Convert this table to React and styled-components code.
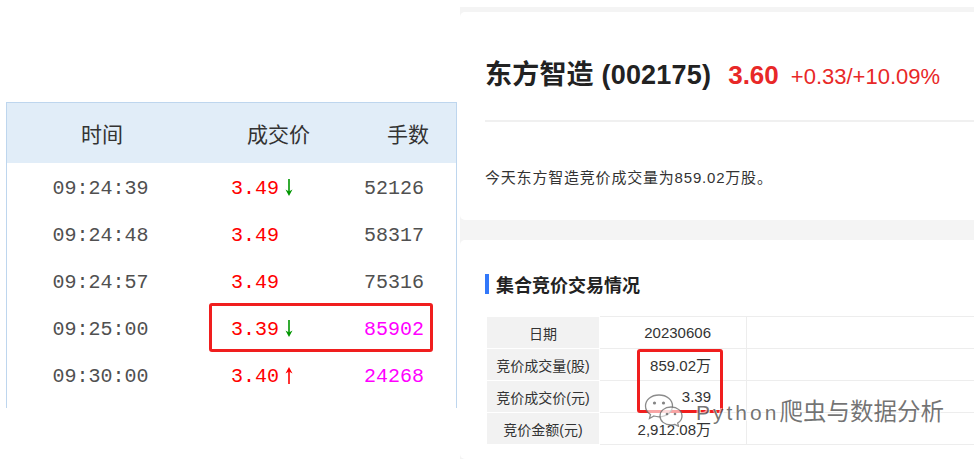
import styled, { createGlobalStyle } from 'styled-components'

const GlobalStyle = createGlobalStyle`
    html, body {
        margin: 0;
        padding: 0;
        background: #ffffff;
    }
    * {
        box-sizing: border-box;
    }
`;

const Page = styled.div`
    position: relative;
    display: flex;
    width: 974px;
    height: 459px;
    overflow: hidden;
    background: #ffffff;
`;

/* ---------- left: tick table ---------- */

const LeftPane = styled.div`
    flex: none;
    width: 460px;
    padding: 102px 0 0 6px;
`;

const TickTable = styled.div`
    width: 451px;
    height: 306px;
    border: 1px solid rgb(190, 214, 238);
    border-bottom: none;
`;

const TickHead = styled.div`
    display: flex;
    align-items: center;
    height: 60px;
    background: rgb(225, 237, 248);
    font-family: "Noto Sans CJK SC", sans-serif;
    font-size: 21px;
    color: #333;
`;

const HeadCell = styled.div`
    width: ${p => p.w}px;
    padding-left: ${p => p.pl || 0}px;
    padding-right: ${p => p.pr || 0}px;
    text-align: ${p => p.align || 'left'};
    flex: ${p => p.grow ? 1 : 'none'};
`;

const TickBody = styled.div`
    padding-top: 2px;
`;

const TickRow = styled.div`
    position: relative;
    display: flex;
    align-items: center;
    height: 47px;
    font-family: "Liberation Mono", monospace;
    font-size: 20px;

    ${p => p.boxed && `
        &::after {
            content: '';
            position: absolute;
            left: 202px;
            right: 23px;
            top: -3px;
            bottom: 1px;
            border: 3px solid rgb(240, 30, 30);
            border-radius: 3px;
        }
    `}
`;

const TimeCell = styled.div`
    width: 190px;
    padding-right: 3px;
    text-align: center;
    color: #505050;
`;

const PriceCell = styled.div`
    width: 140px;
    padding-left: 34px;
    display: flex;
    align-items: center;
    color: #ff0000;
`;

const VolCell = styled.div`
    flex: 1;
    text-align: right;
    padding-right: 32px;
    color: ${p => p.hot ? '#ff00ff' : '#505050'};
`;

const ArrowMark = styled.svg`
    margin-left: 5px;
    margin-top: -2px;
`;

const Arrow = ({ dir }) => {
    const color = dir === 'down' ? 'rgb(0, 150, 0)' : 'rgb(255, 0, 0)';
    return (
        <ArrowMark width="10" height="19" viewBox="0 0 10 19">
            {dir === 'down' ? (
                <>
                    <line x1="5" y1="1" x2="5" y2="14" stroke={color} strokeWidth="1.6" />
                    <path d="M1.5 11.5 L5 18 L8.5 11.5 L5 13.5 Z" fill={color} />
                </>
            ) : (
                <>
                    <line x1="5" y1="5" x2="5" y2="18" stroke={color} strokeWidth="1.6" />
                    <path d="M1.5 7.5 L5 1 L8.5 7.5 L5 5.5 Z" fill={color} />
                </>
            )}
        </ArrowMark>
    );
}

const ticks = [
    { time: '09:24:39', price: '3.49', arrow: 'down', vol: '52126' },
    { time: '09:24:48', price: '3.49', vol: '58317' },
    { time: '09:24:57', price: '3.49', vol: '75316' },
    { time: '09:25:00', price: '3.39', arrow: 'down', vol: '85902', hot: true, boxed: true },
    { time: '09:30:00', price: '3.40', arrow: 'up', vol: '24268', hot: true },
];

/* ---------- right: stock page ---------- */

const RightPane = styled.div`
    flex: 1;
    margin-top: 7px;
    padding-top: 5px;
    background: #f4f4f4;
    display: flex;
    flex-direction: column;
`;

const Card = styled.div`
    background: #ffffff;
    border-radius: 5px;
    overflow: hidden;
    height: ${p => p.h ? `${p.h}px` : 'auto'};
    flex: ${p => p.grow ? 1 : 'none'};
    margin-top: ${p => p.mt || 0}px;
`;

const QuoteHeader = styled.div`
    display: flex;
    align-items: center;
    height: 110px;
    margin-left: 25px;
    padding-top: 12px;
    border-bottom: 2px solid #f0f0f0;
    font-family: "Liberation Sans", "Noto Sans CJK SC", sans-serif;
`;

const QuoteLine = styled.div`
    display: flex;
    align-items: baseline;
`;

const StockName = styled.span`
    font-size: 27px;
    font-weight: bold;
    color: #222;
    letter-spacing: 0.2px;
`;

const LastPrice = styled.span`
    margin-left: 17px;
    font-size: 26px;
    font-weight: bold;
    color: rgb(232, 40, 40);
`;

const Change = styled.span`
    margin-left: 12px;
    font-size: 22px;
    color: rgb(232, 40, 40);
`;

const EdgeRule = styled.div`
    margin-left: auto;
    width: 7px;
    height: 47px;
    border-left: 1px solid #ececec;
`;

const InfoText = styled.div`
    padding: 45px 0 0 25px;
    font-family: "Liberation Sans", "Noto Sans CJK SC", sans-serif;
    font-size: 15px;
    letter-spacing: 0.8px;
    line-height: 22px;
    color: #333;
`;

const SectionTitle = styled.div`
    display: flex;
    align-items: center;
    gap: 7px;
    margin: 32px 0 0 25px;
    height: 24px;
    font-family: "Noto Sans CJK SC", sans-serif;
    font-size: 18px;
    font-weight: bold;
    color: #222;

    &::before {
        content: '';
        width: 4px;
        height: 20px;
        background: rgb(50, 120, 250);
    }
`;

const AuctionWrap = styled.div`
    position: relative;
    margin: 20px 0 0 26px;
`;

const AuctionTable = styled.table`
    border-collapse: collapse;
    width: 520px;
    font-family: "Liberation Sans", "Noto Sans CJK SC", sans-serif;
    font-size: 14px;
    color: #333;

    td {
        height: 32px;
        padding: 0;
        border: 1px solid #ededed;
    }
`;

const LabelCell = styled.td`
    width: 113px;
    background: #f2f2f2;
    text-align: center;
    border-color: #ffffff !important;
`;

const ValueCell = styled.td`
    width: 147px;
    text-align: right;
    padding-right: 35px !important;
    font-size: 15px;
`;

const RedBox = styled.div`
    position: absolute;
    left: 151px;
    top: 33px;
    width: 86px;
    height: 64px;
    border: 3px solid rgb(240, 30, 30);
    border-radius: 3px;
`;

const auction = [
    ['日期', '20230606'],
    ['竞价成交量(股)', '859.02万'],
    ['竞价成交价(元)', '3.39'],
    ['竞价金额(元)', '2,912.08万'],
];

/* ---------- watermark ---------- */

const Watermark = styled.div`
    position: absolute;
    left: 644px;
    top: 393px;
    display: flex;
    align-items: center;
    gap: 12px;
    font-family: "Liberation Sans", "Noto Sans CJK SC", sans-serif;
    font-size: 21px;
    color: rgba(70, 70, 70, 0.75);
    text-shadow: 1px 1px 0 rgba(255, 255, 255, 0.9), -1px -1px 0 rgba(255, 255, 255, 0.6);
`;

const MarkLatin = styled.span`
    letter-spacing: 3px;
`;

const MarkCjk = styled.span`
    font-size: 23.5px;
`;

const WeChatLogo = () => (
    <svg width="40" height="34" viewBox="0 0 40 34">
        <g fill="rgba(255,255,255,0.6)" stroke="rgba(110,110,110,0.8)" strokeWidth="1.3">
            <path d="M15 2 C7 2 1.5 7 1.5 13 C1.5 16.5 3.5 19.5 6.5 21.5 L5.5 25.5 L10 23 C11.6 23.5 13.3 23.8 15 23.8 C23 23.8 28.5 18.8 28.5 13 C28.5 7 23 2 15 2 Z" />
            <path d="M27 14 C20.5 14 16 18 16 23 C16 28 20.5 32 27 32 C28.4 32 29.7 31.8 30.9 31.4 L34.5 33.3 L33.7 30 C36.4 28.4 38 25.8 38 23 C38 18 33.5 14 27 14 Z" />
        </g>
        <g fill="rgba(110,110,110,0.85)">
            <circle cx="10.5" cy="10" r="1.6" />
            <circle cx="19.5" cy="10" r="1.6" />
            <circle cx="23" cy="21" r="1.3" />
            <circle cx="31" cy="21" r="1.3" />
        </g>
    </svg>
);

export default function App() {
    return (
        <>
            <GlobalStyle />
            <Page>
                <LeftPane>
                    <TickTable>
                        <TickHead>
                            <HeadCell w={190} align="center">时间</HeadCell>
                            <HeadCell w={140} pl={50}>成交价</HeadCell>
                            <HeadCell grow align="right" pr={27}>手数</HeadCell>
                        </TickHead>
                        <TickBody>
                            {ticks.map(t => (
                                <TickRow key={t.time} boxed={t.boxed}>
                                    <TimeCell>{t.time}</TimeCell>
                                    <PriceCell>
                                        {t.price}
                                        {t.arrow && <Arrow dir={t.arrow} />}
                                    </PriceCell>
                                    <VolCell hot={t.hot}>{t.vol}</VolCell>
                                </TickRow>
                            ))}
                        </TickBody>
                    </TickTable>
                </LeftPane>

                <RightPane>
                    <Card h={208}>
                        <QuoteHeader>
                            <QuoteLine>
                                <StockName>东方智造 (002175)</StockName>
                                <LastPrice>3.60</LastPrice>
                                <Change>+0.33/+10.09%</Change>
                            </QuoteLine>
                            <EdgeRule />
                        </QuoteHeader>
                        <InfoText>今天东方智造竞价成交量为859.02万股。</InfoText>
                    </Card>
                    <Card grow mt={20}>
                        <SectionTitle>集合竞价交易情况</SectionTitle>
                        <AuctionWrap>
                            <AuctionTable>
                                <tbody>
                                    {auction.map(([k, v]) => (
                                        <tr key={k}>
                                            <LabelCell>{k}</LabelCell>
                                            <ValueCell>{v}</ValueCell>
                                            <td />
                                        </tr>
                                    ))}
                                </tbody>
                            </AuctionTable>
                            <RedBox />
                        </AuctionWrap>
                    </Card>
                </RightPane>

                <Watermark>
                    <WeChatLogo />
                    <span>
                        <MarkLatin>Python</MarkLatin>
                        <MarkCjk>爬虫与数据分析</MarkCjk>
                    </span>
                </Watermark>
            </Page>
        </>
    );
}
